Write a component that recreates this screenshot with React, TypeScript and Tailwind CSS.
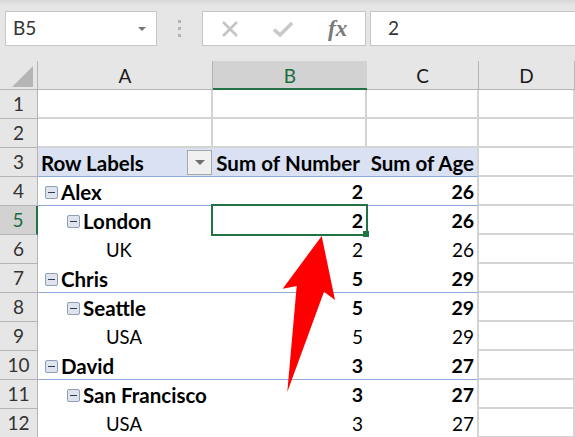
const font = { fontFamily: '"Lato", "Liberation Sans", sans-serif' };

type Row = { n: number; label: string; indent: 0 | 1 | 2; b: string; c: string; bold: boolean; blue?: boolean };

const rows: Row[] = [
  { n: 4, label: "Alex", indent: 0, b: "2", c: "26", bold: true, blue: true },
  { n: 5, label: "London", indent: 1, b: "2", c: "26", bold: true },
  { n: 6, label: "UK", indent: 2, b: "2", c: "26", bold: false },
  { n: 7, label: "Chris", indent: 0, b: "5", c: "29", bold: true, blue: true },
  { n: 8, label: "Seattle", indent: 1, b: "5", c: "29", bold: true },
  { n: 9, label: "USA", indent: 2, b: "5", c: "29", bold: false },
  { n: 10, label: "David", indent: 0, b: "3", c: "27", bold: true, blue: true },
  { n: 11, label: "San Francisco", indent: 1, b: "3", c: "27", bold: true },
  { n: 12, label: "USA", indent: 2, b: "3", c: "27", bold: false },
];

function Collapse() {
  return (
    <span className="flex h-[13px] w-[13px] shrink-0 items-center justify-center rounded-[2px] border border-[#8f9db8] bg-[#dfe3ee]">
      <span className="h-px w-[7px] bg-[#2f3a55]" />
    </span>
  );
}

function RowHead({ n, active }: { n: number; active?: boolean }) {
  return (
    <div
      className={
        active
          ? "flex items-center justify-center border-b border-[#b4b4b4] border-r-2 border-r-[#217346] bg-[#d2d2d2] text-[19px] text-[#1d6b40]"
          : "flex items-center justify-center border-b border-r border-[#b4b4b4] bg-[#e6e6e6] text-[19px] text-[#333333]"
      }
    >
      {n}
    </div>
  );
}

function ColHead({ t, active }: { t: string; active?: boolean }) {
  return (
    <div
      className={
        active
          ? "flex items-center justify-center border-b-2 border-[#217346] bg-[#d2d2d2] pt-[3px] text-[19px] text-[#1d6b40]"
          : "flex items-center justify-center border-b border-r border-[#b4b4b4] bg-[#e6e6e6] pt-[3px] text-[19px] text-[#1a1a1a]"
      }
    >
      {t}
    </div>
  );
}

export default function App() {
  return (
    <div className="relative h-[437px] w-[575px] overflow-hidden bg-white" style={font}>
      <div className="flex h-[61px] items-start bg-gradient-to-b from-[#d9d9d9] via-[#e6e6e6] via-10% to-[#e6e6e6] pl-[5px] pt-[11px]">
        <div className="flex h-[35px] w-[152px] items-center justify-between border border-[#c6c6c6] bg-white pl-[7px] pr-[10px] text-[19px] text-[#333333]">
          <span>B5</span>
          <span className="h-0 w-0 border-x-[4px] border-t-[4px] border-x-transparent border-t-[#777777]" />
        </div>
        <div className="ml-[20px] flex h-[35px] w-[5px] flex-col items-center justify-center gap-[4px]">
          <span className="h-[3px] w-[3px] bg-[#b4b4b4]" />
          <span className="h-[3px] w-[3px] bg-[#b4b4b4]" />
          <span className="h-[3px] w-[3px] bg-[#b4b4b4]" />
        </div>
        <div className="ml-[20px] flex h-[35px] w-[164px] items-center border border-[#c6c6c6] bg-white">
          <svg className="ml-[18px]" width="18" height="18" viewBox="0 0 18 18">
            <path d="M2 2 L16 16 M16 2 L2 16" stroke="#c4c4c4" strokeWidth="2.6" />
          </svg>
          <svg className="ml-[34px]" width="20" height="16" viewBox="0 0 20 16">
            <path d="M1 8.5 L7 14 L19 2" fill="none" stroke="#c8c8c8" strokeWidth="3.4" />
          </svg>
          <span
            className="ml-[35px] text-[23px] leading-none font-bold text-[#7a7a7a] italic"
            style={{ fontFamily: '"Liberation Serif", serif' }}
          >
            fx
          </span>
        </div>
        <div className="ml-[4px] flex h-[35px] flex-1 items-center border-y border-l border-[#c6c6c6] bg-white pl-[17px] text-[19px] text-[#333333]">
          2
        </div>
      </div>

      <div className="grid grid-cols-[38px_175px_154px_112px_96px] grid-rows-[29px_repeat(12,29px)] text-black">
        <div className="flex items-end justify-end border-b border-r border-[#b4b4b4] bg-[#e6e6e6] pb-[2px] pr-[3px]">
          <svg width="22" height="22" viewBox="0 0 22 22">
            <path d="M21 1 V22 H0 Z" fill="#b5b5b5" />
          </svg>
        </div>
        <ColHead t="A" />
        <ColHead t="B" active />
        <ColHead t="C" />
        <ColHead t="D" />

        {[1, 2].map((n) => (
          <div key={n} className="contents">
            <RowHead n={n} />
            <div className="border-b-2 border-r-2 border-[#d4d4d4]" />
            <div className="border-b-2 border-r-2 border-[#d4d4d4]" />
            <div className="border-b-2 border-r-2 border-[#d4d4d4]" />
            <div className="border-b-2 border-r-2 border-[#d4d4d4]" />
          </div>
        ))}

        <RowHead n={3} />
        <div className="flex items-center justify-between border-b border-[#8ea9db] bg-[#d9e1f2] pl-[3px] text-[20.5px] font-bold">
          <span className="pt-[2px]">Row Labels</span>
          <span className="mr-px flex h-[25px] w-[25px] items-center justify-center border border-[#a8a8a8] bg-[#f0f0f0]">
            <span className="h-0 w-0 border-x-[5px] border-t-[5px] border-x-transparent border-t-[#6e6e6e]" />
          </span>
        </div>
        <div className="flex items-center justify-end whitespace-nowrap border-b border-[#8ea9db] bg-[#d9e1f2] pr-[7px] pt-[2px] text-[20.5px] font-bold tracking-[0.08px]">
          Sum of Number
        </div>
        <div className="flex items-center justify-end whitespace-nowrap border-b border-r-2 border-[#8ea9db] border-r-[#d4d4d4] bg-[#d9e1f2] pr-[3px] pt-[2px] text-[20.5px] font-bold">
          Sum of Age
        </div>
        <div className="border-b-2 border-r-2 border-[#d4d4d4]" />

        {rows.map((r) => {
          const line = r.blue ? "border-b border-b-[#8ea9db]" : "";
          const labelWeight = r.bold ? "text-[20.5px] font-bold" : "text-[18.5px] font-normal";
          const numWeight = r.bold ? "text-[19.5px] font-bold" : "text-[19px] font-normal";
          const indent = r.indent === 0 ? "pl-[7px]" : r.indent === 1 ? "pl-[29px]" : "pl-[68px]";
          const labelTop = r.indent === 1 ? "pt-px" : "pt-[2px]";
          return (
            <div key={r.n} className="contents">
              <RowHead n={r.n} active={r.n === 5} />
              <div className={`flex items-center gap-[3px] ${labelTop} ${indent} ${line} ${labelWeight}`}>
                {r.indent < 2 && <Collapse />}
                <span>{r.label}</span>
              </div>
              <div className={`relative flex items-center justify-end pr-[4px] pt-px ${line} ${numWeight}`}>
                {r.b}
                {r.n === 5 && (
                  <span className="absolute -bottom-px -left-[2px] -right-px -top-[2px] border-2 border-[#217346]">
                    <span className="absolute -bottom-[3px] -right-[3px] h-[6px] w-[6px] bg-[#217346]" />
                  </span>
                )}
              </div>
              <div className={`flex items-center justify-end border-r-2 border-r-[#d4d4d4] pr-[3px] pt-px ${line} ${numWeight}`}>
                {r.c}
              </div>
              <div className="border-b-2 border-r-2 border-[#d4d4d4]" />
            </div>
          );
        })}
      </div>

      <svg className="absolute left-0 top-0" width="575" height="437" viewBox="0 0 575 437">
        <path d="M321.7 236 L282.7 288.7 L296.7 286 L287.3 392 L324 291.7 L335 300 Z" fill="#ff0000" />
      </svg>
    </div>
  );
}
